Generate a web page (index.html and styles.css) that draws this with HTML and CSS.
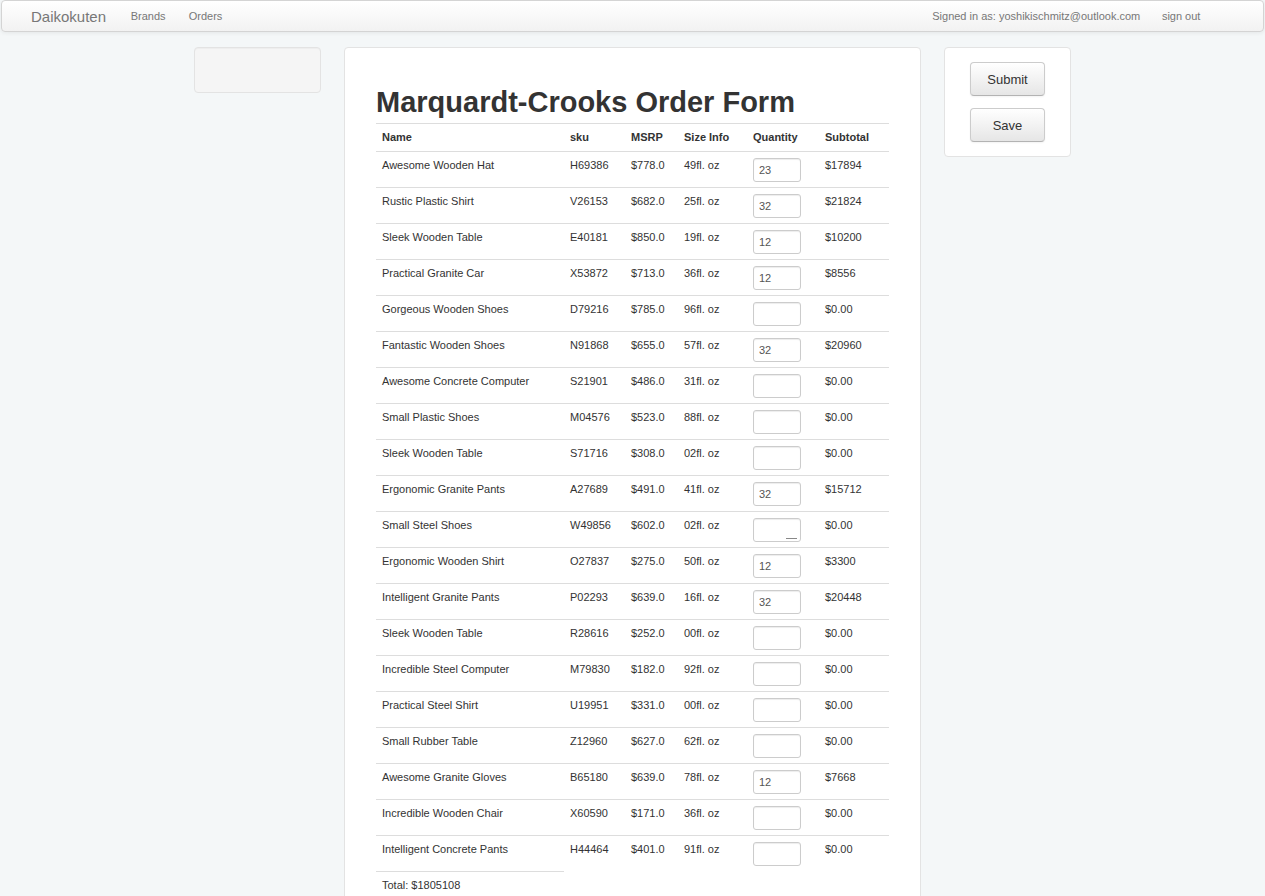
FILE: index.html
```html
<!DOCTYPE html>
<html>
<head>
<meta charset="utf-8">
<title>Order Form</title>
<link rel="stylesheet" href="styles.css">
</head>
<body>
<div class="navbar">
  <a class="brand">Daikokuten</a>
  <a class="nav-link">Brands</a>
  <a class="nav-link">Orders</a>
  <span class="nav-right">
    <span class="nav-text">Signed in as: yoshikischmitz@outlook.com</span>
    <a class="nav-link">sign out</a>
  </span>
</div>
<div class="layout">
  <div class="well"></div>
  <div class="panel">
    <h1 class="title">Marquardt-Crooks Order Form</h1>
    <table class="orders">
      <thead>
        <tr><th class="c-name">Name</th><th class="c-sku">sku</th><th class="c-msrp">MSRP</th><th class="c-size">Size Info</th><th class="c-qty">Quantity</th><th class="c-sub">Subtotal</th></tr>
      </thead>
      <tbody>
        <tr><td>Awesome Wooden Hat</td><td>H69386</td><td>$778.0</td><td>49fl. oz</td><td><input class="qty" value="23"></td><td>$17894</td></tr>
        <tr><td>Rustic Plastic Shirt</td><td>V26153</td><td>$682.0</td><td>25fl. oz</td><td><input class="qty" value="32"></td><td>$21824</td></tr>
        <tr><td>Sleek Wooden Table</td><td>E40181</td><td>$850.0</td><td>19fl. oz</td><td><input class="qty" value="12"></td><td>$10200</td></tr>
        <tr><td>Practical Granite Car</td><td>X53872</td><td>$713.0</td><td>36fl. oz</td><td><input class="qty" value="12"></td><td>$8556</td></tr>
        <tr><td>Gorgeous Wooden Shoes</td><td>D79216</td><td>$785.0</td><td>96fl. oz</td><td><input class="qty" value=""></td><td>$0.00</td></tr>
        <tr><td>Fantastic Wooden Shoes</td><td>N91868</td><td>$655.0</td><td>57fl. oz</td><td><input class="qty" value="32"></td><td>$20960</td></tr>
        <tr><td>Awesome Concrete Computer</td><td>S21901</td><td>$486.0</td><td>31fl. oz</td><td><input class="qty" value=""></td><td>$0.00</td></tr>
        <tr><td>Small Plastic Shoes</td><td>M04576</td><td>$523.0</td><td>88fl. oz</td><td><input class="qty" value=""></td><td>$0.00</td></tr>
        <tr><td>Sleek Wooden Table</td><td>S71716</td><td>$308.0</td><td>02fl. oz</td><td><input class="qty" value=""></td><td>$0.00</td></tr>
        <tr><td>Ergonomic Granite Pants</td><td>A27689</td><td>$491.0</td><td>41fl. oz</td><td><input class="qty" value="32"></td><td>$15712</td></tr>
        <tr><td>Small Steel Shoes</td><td>W49856</td><td>$602.0</td><td>02fl. oz</td><td><span class="qty-wrap"><input class="qty" value=""><span class="grip"></span></span></td><td>$0.00</td></tr>
        <tr><td>Ergonomic Wooden Shirt</td><td>O27837</td><td>$275.0</td><td>50fl. oz</td><td><input class="qty" value="12"></td><td>$3300</td></tr>
        <tr><td>Intelligent Granite Pants</td><td>P02293</td><td>$639.0</td><td>16fl. oz</td><td><input class="qty" value="32"></td><td>$20448</td></tr>
        <tr><td>Sleek Wooden Table</td><td>R28616</td><td>$252.0</td><td>00fl. oz</td><td><input class="qty" value=""></td><td>$0.00</td></tr>
        <tr><td>Incredible Steel Computer</td><td>M79830</td><td>$182.0</td><td>92fl. oz</td><td><input class="qty" value=""></td><td>$0.00</td></tr>
        <tr><td>Practical Steel Shirt</td><td>U19951</td><td>$331.0</td><td>00fl. oz</td><td><input class="qty" value=""></td><td>$0.00</td></tr>
        <tr><td>Small Rubber Table</td><td>Z12960</td><td>$627.0</td><td>62fl. oz</td><td><input class="qty" value=""></td><td>$0.00</td></tr>
        <tr><td>Awesome Granite Gloves</td><td>B65180</td><td>$639.0</td><td>78fl. oz</td><td><input class="qty" value="12"></td><td>$7668</td></tr>
        <tr><td>Incredible Wooden Chair</td><td>X60590</td><td>$171.0</td><td>36fl. oz</td><td><input class="qty" value=""></td><td>$0.00</td></tr>
        <tr><td>Intelligent Concrete Pants</td><td>H44464</td><td>$401.0</td><td>91fl. oz</td><td><input class="qty" value=""></td><td>$0.00</td></tr>
        <tr class="total-row"><td>Total: $1805108</td></tr>
      </tbody>
    </table>
  </div>
  <div class="actions">
    <button class="btn">Submit</button>
    <button class="btn">Save</button>
  </div>
</div>
</body>
</html>
```
FILE: styles.css
```css
html, body {
  margin: 0;
  padding: 0;
}
body {
  background: #f4f7f8;
  font-family: "Liberation Sans", Arial, sans-serif;
  font-size: 11px;
  color: #333;
  height: 896px;
  overflow: hidden;
}
.navbar {
  display: flex;
  align-items: center;
  height: 30px;
  margin: 0 1px;
  padding: 0 51px 0 29px;
  background: linear-gradient(#ffffff, #f2f2f2);
  border: 1px solid #d4d4d4;
  border-radius: 4px;
  box-shadow: 0 1px 4px rgba(0,0,0,0.065);
}
.brand {
  font-size: 15px;
  color: #777;
  margin-right: 13px;
}
.nav-link {
  color: #777;
  padding: 0 11.6px;
}
.nav-right {
  margin-left: auto;
  display: flex;
  align-items: center;
}
.nav-text {
  color: #777;
  margin-right: 10px;
}
.layout {
  width: 877px;
  margin: 15px auto 0;
  display: grid;
  grid-template-columns: 127px 577px 127px;
  column-gap: 23px;
  align-items: start;
}
.well {
  height: 44px;
  background: #f5f5f5;
  border: 1px solid #e3e3e3;
  border-radius: 4px;
  box-shadow: inset 0 1px 1px rgba(0,0,0,0.03);
}
.panel {
  background: #fff;
  border: 1px solid #e3e3e3;
  border-radius: 4px;
  padding: 36px 31px 40px;
  min-height: 900px;
}
.title {
  margin: 0 0 3px;
  font-size: 29px;
  line-height: 36px;
  font-weight: bold;
  color: #333;
}
.orders {
  width: 100%;
  border-collapse: collapse;
  border-spacing: 0;
}
.orders th,
.orders td {
  text-align: left;
  vertical-align: top;
  padding: 5px 6px 5px;
  line-height: 16px;
  border-top: 1px solid #ddd;
  font-size: 11px;
}
.orders th {
  font-weight: bold;
  padding-bottom: 6px;
}
.c-name { width: 176px; }
.c-sku { width: 49px; }
.c-msrp { width: 41px; }
.c-size { width: 57px; }
.c-qty { width: 60px; }
.qty {
  box-sizing: border-box;
  width: 48px;
  height: 24px;
  margin: 1px 0 0;
  padding: 4px 5px;
  border: 1px solid #ccc;
  border-radius: 3px;
  font-family: "Liberation Sans", Arial, sans-serif;
  font-size: 11px;
  color: #555;
  background: #fff;
  box-shadow: inset 0 1px 1px rgba(0,0,0,0.075);
  display: block;
}
.qty-wrap {
  position: relative;
  display: block;
  width: 48px;
}
.grip {
  position: absolute;
  left: 33px;
  bottom: 3px;
  width: 11px;
  height: 1px;
  background: #888;
}
.actions {
  background: #fff;
  border: 1px solid #e3e3e3;
  border-radius: 4px;
  padding: 14px 0;
  display: flex;
  flex-direction: column;
  align-items: center;
  gap: 12px;
}
.btn {
  width: 75px;
  height: 34px;
  font-family: "Liberation Sans", Arial, sans-serif;
  font-size: 13px;
  color: #333;
  background: linear-gradient(#ffffff, #e6e6e6);
  border: 1px solid #ccc;
  border-bottom-color: #b3b3b3;
  border-radius: 4px;
  box-shadow: inset 0 1px 0 rgba(255,255,255,0.2), 0 1px 2px rgba(0,0,0,0.05);
  padding: 0;
}
```
